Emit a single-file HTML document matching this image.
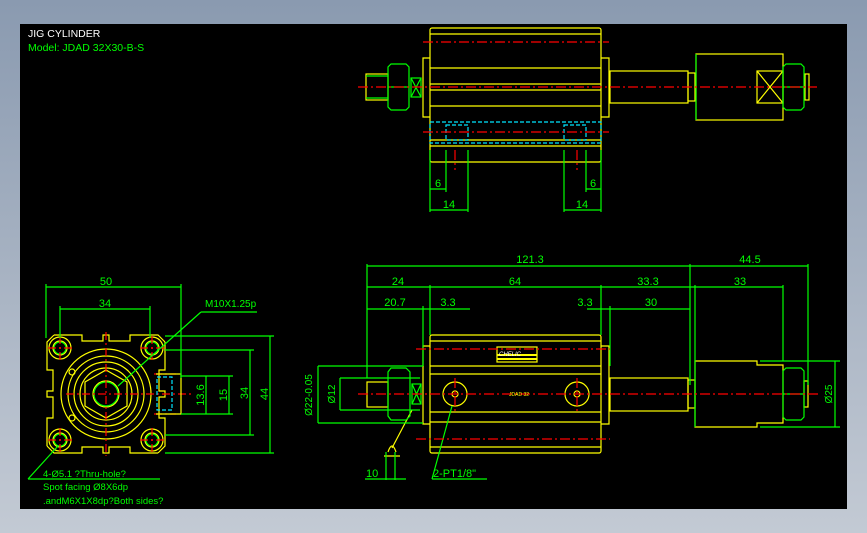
<!DOCTYPE html>
<html><head><meta charset="utf-8"><style>
html,body{margin:0;padding:0;width:867px;height:533px;overflow:hidden;background:linear-gradient(#8a9ab0,#c3cad4);}
svg{position:absolute;left:0;top:0}
text{font-family:"Liberation Sans",sans-serif;font-size:11px;fill:#00ff00}
</style></head><body>
<svg width="867" height="533" viewBox="0 0 867 533">
<rect x="20" y="24" width="827" height="485" fill="#000"/>
<text x="28" y="37" style="fill:#fff;font-size:10.5px">JIG CYLINDER</text>
<text x="28" y="51" style="font-size:10.5px">Model: JDAD 32X30-B-S</text>

<g fill="none" stroke-width="1.2">
<!-- TOP VIEW -->
<g stroke="#ffff00">
<rect x="430" y="28" width="171" height="134" rx="2"/>
<path d="M430 34H601M430 68H601M430 84H601M430 90H601M430 106H601M430 140H601M430 146H601"/>
<path d="M430 58H423V117H430M601 58H609V117H601"/>
<rect x="610" y="71" width="78" height="32"/>
<rect x="688" y="73" width="7" height="28"/>
<rect x="696" y="54" width="87" height="66"/>
<rect x="757" y="71" width="26" height="32"/>
<path d="M757 71L783 103M783 71L757 103"/>
<rect x="805" y="74" width="4" height="26"/>
<rect x="366" y="74" width="22" height="26"/>
</g>
<g stroke="#00ff00">
<path d="M391 64H406L409 67V107L406 110H391L388 107V67Z"/>
<path d="M388 87H409M366 76H388M366 98H388"/>
<rect x="411" y="78" width="10" height="19"/>
<path d="M411 78L421 97M421 78L411 97"/>
<path d="M786 64H801L804 67V107L801 110H786L783 107V67Z"/>
<path d="M783 87H805M696 54V120"/>
<path d="M430 150V212M446 150V192M468 150V212M564 150V212M586 150V192M601 150V212"/>
<path d="M430 189H446M586 189H601M430 210H468M564 210H601"/>
</g>
<g stroke="#00e5ff" stroke-dasharray="4 2">
<rect x="430" y="122" width="171" height="21"/>
<rect x="446" y="125" width="22" height="15"/>
<rect x="564" y="125" width="22" height="15"/>
</g>
<g stroke="#ff0000" stroke-dasharray="10 3 2 3">
<path d="M423 42H609M358 87H817M423 132H609M455 150V170M577 150V170"/>
</g>

<!-- FRONT VIEW -->
<g transform="translate(106,394)">
<g stroke="#ffff00">
<path id="sd" d="M-52 -59L-24 -59L-24 -53L-3 -53L-3 -59L3 -59L3 -53L24 -53L24 -59L52 -59L59 -52"/>
<use href="#sd" transform="rotate(90)"/><use href="#sd" transform="rotate(180)"/><use href="#sd" transform="rotate(270)"/>
<circle r="45"/><circle r="38"/><circle r="32"/><circle r="26"/><circle r="13"/>
<path d="M0 -24L21 -12L21 12L0 24L-21 12L-21 -12Z"/>
<circle cx="-46" cy="-46" r="11"/><circle cx="46" cy="-46" r="11"/><circle cx="-46" cy="46" r="11"/><circle cx="46" cy="46" r="11"/>
<circle cx="-46" cy="-46" r="7"/><circle cx="46" cy="-46" r="7"/><circle cx="-46" cy="46" r="7"/><circle cx="46" cy="46" r="7"/>
<circle cx="-34" cy="-22" r="3"/><circle cx="-34" cy="24" r="3"/>
</g>
<g stroke="#00ff00">
<circle r="12"/>
<circle cx="-46" cy="-46" r="6"/><circle cx="46" cy="-46" r="6"/><circle cx="-46" cy="46" r="6"/><circle cx="46" cy="46" r="6"/>
</g>
<g stroke="#ff0000" stroke-dasharray="8 3 2 3">
<path d="M-40 0H85M0 -62V62M-58 -46H-34M-46 -58V-34M34 -46H58M46 -58V-34M-58 46H-34M-46 34V58M34 46H58M46 34V58M48 -20H70M48 20H70"/>
</g>
</g>
<g stroke="#ffff00"><path d="M156 374H181V414H156"/></g>
<g stroke="#00e5ff" stroke-dasharray="4 2"><rect x="157" y="377" width="15" height="33"/></g>
<g stroke="#00ff00">
<path d="M46 284V338M181 284V378M60 306V338M150 306V338M46 287H181M60 309H150"/>
<path d="M165 336H274M165 350H254M181 376H233M181 414H233M270 336V453M250 350V435M229 376V414M206 376V414M165 453H274M165 435H254"/>
<path d="M201 312H257M201 312L118 386"/>
<path d="M28 479H160M28 479L58 446"/>
</g>

<!-- SIDE VIEW -->
<g stroke="#ffff00">
<rect x="430" y="335" width="171" height="118" rx="2"/>
<path d="M430 341H601M430 366H601M430 374H601M430 412H601M430 422H601M430 447H601"/>
<path d="M430 346H423V424H430M601 346H609V424H601"/>
<rect x="610" y="378" width="78" height="33"/>
<rect x="688" y="380" width="7" height="28"/>
<path d="M695 361H757V365H783V423H757V427H695Z"/>
<rect x="804" y="381" width="4" height="26"/>
<rect x="497" y="347" width="40" height="15"/>
<path d="M497 355H537M497 359H537" stroke-width="2"/>
<circle cx="455" cy="394" r="12"/><circle cx="577" cy="394" r="12"/>
<circle cx="455" cy="394" r="3"/><circle cx="577" cy="394" r="3"/>
<rect x="367" y="382" width="21" height="25"/>
<path d="M412 410L392 448M388 452Q392 440 396 452M384 456H400"/>
</g>
<g stroke="#00ff00">
<path d="M391 368H406L410 372V416L406 420H391L388 416V372Z"/>
<rect x="412" y="384" width="9" height="20"/>
<path d="M412 384L421 404M421 384L412 404"/>
<path d="M786 368H801L804 371V417L801 420H786L783 417V371Z"/>
<path d="M783 394H804M695 361V427"/>
<path d="M367 264V378M423 306V366M430 285V335M601 285V335M610 306V366M690 264V385M695 285V361M783 285V361M808 264V385"/>
<path d="M367 266H808M367 287H783M367 309H470M587 309H690"/>
<path d="M318 366H423M318 423H423M340 378H420M340 410H420M318 366V423M340 378V410"/>
<path d="M760 361H840M760 427H840M835 361V427"/>
<path d="M365 479H406M386 452V480M395 452V480"/>
<path d="M432 479H487M432 479L452 406"/>
</g>
<g stroke="#ff0000" stroke-dasharray="10 3 2 3">
<path d="M416 349H610M358 394H820M416 439H610M455 378V412M577 378V412"/>
</g>
</g>

<!-- front dims text -->
<text x="106" y="285" text-anchor="middle">50</text>
<text x="105" y="307" text-anchor="middle">34</text>
<text x="205" y="307" style="font-size:10px">M10X1.25p</text>
<text transform="translate(204,395) rotate(-90)" text-anchor="middle">13.6</text>
<text transform="translate(227,395) rotate(-90)" text-anchor="middle">15</text>
<text transform="translate(248,393) rotate(-90)" text-anchor="middle">34</text>
<text transform="translate(268,394) rotate(-90)" text-anchor="middle">44</text>
<text x="43" y="477" style="font-size:9.5px">4-Ø5.1 ?Thru-hole?</text>
<text x="43" y="490" style="font-size:9.5px">Spot facing Ø8X6dp</text>
<text x="43" y="504" style="font-size:9.5px">.andM6X1X8dp?Both sides?</text>
<!-- top dims -->
<text x="438" y="187" text-anchor="middle">6</text>
<text x="593" y="187" text-anchor="middle">6</text>
<text x="449" y="208" text-anchor="middle">14</text>
<text x="582" y="208" text-anchor="middle">14</text>
<!-- side dims -->
<text x="530" y="263" text-anchor="middle">121.3</text>
<text x="750" y="263" text-anchor="middle">44.5</text>
<text x="398" y="285" text-anchor="middle">24</text>
<text x="515" y="285" text-anchor="middle">64</text>
<text x="648" y="285" text-anchor="middle">33.3</text>
<text x="740" y="285" text-anchor="middle">33</text>
<text x="395" y="306" text-anchor="middle">20.7</text>
<text x="448" y="306" text-anchor="middle">3.3</text>
<text x="585" y="306" text-anchor="middle">3.3</text>
<text x="651" y="306" text-anchor="middle">30</text>
<text transform="translate(312,395) rotate(-90)" text-anchor="middle" style="font-size:10px">Ø22-0.05</text>
<text transform="translate(335,394) rotate(-90)" text-anchor="middle" style="font-size:10px">Ø12</text>
<text transform="translate(832,394) rotate(-90)" text-anchor="middle" style="font-size:10px">Ø25</text>
<text x="366" y="477">10</text>
<text x="433" y="477">2-PT1/8"</text>
<text x="499" y="356" style="fill:#fff;font-size:6px;font-style:italic">CHELIC</text>
<text x="509" y="396" style="fill:#ffff00;font-size:5px">JDAD 32</text>
</svg>
</body></html>
